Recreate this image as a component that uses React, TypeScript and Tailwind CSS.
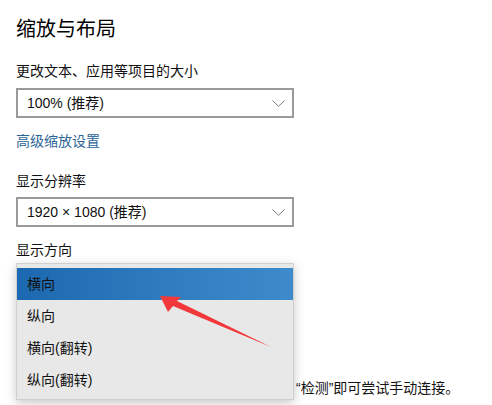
import React from "react";

const font = { fontFamily: '"Liberation Sans", "Noto Sans CJK SC", sans-serif' };

function Chevron() {
  return (
    <svg width="13" height="7" viewBox="0 0 13 7" className="shrink-0">
      <path d="M0.5 0.5 L6.5 6.3 L12.5 0.5" fill="none" stroke="#7a7a7a" strokeWidth="1" />
    </svg>
  );
}

function Select({ value }: { value: string }) {
  return (
    <div className="flex items-center justify-between w-[278px] h-[30px] border-2 border-[#9a9a9a] bg-white pl-[9px] pr-[7px]">
      <span className="text-[14px] leading-[20px] text-[#111]">{value}</span>
      <Chevron />
    </div>
  );
}

export default function App() {
  const items = ["横向", "纵向", "横向(翻转)", "纵向(翻转)"];
  return (
    <div className="relative w-[492px] h-[405px] overflow-hidden bg-white" style={font}>
      <div className="flex flex-col items-start px-4">
        <div className="mt-[15px] text-[20px] leading-[28px] text-black">缩放与布局</div>
        <div className="mt-[18px] text-[14px] leading-[20px] text-[#111]">更改文本、应用等项目的大小</div>
        <div className="mt-[7px]">
          <Select value="100% (推荐)" />
        </div>
        <div className="mt-[13px] text-[14px] leading-[20px] text-[#2c6496]">高级缩放设置</div>
        <div className="mt-[20px] text-[14px] leading-[20px] text-[#111]">显示分辨率</div>
        <div className="mt-[6px]">
          <Select value="1920 × 1080 (推荐)" />
        </div>
        <div className="mt-[13px] text-[14px] leading-[20px] text-[#111]">显示方向</div>
        <div className="mt-[118px] ml-[280px] text-[14px] leading-[20px] text-[#111] whitespace-nowrap">
          “检测”即可尝试手动连接。
        </div>
      </div>

      {/* dropdown popup */}
      <div className="absolute left-[16px] top-[263px] w-[278px] h-[137px] border border-[#cfcfcf] bg-[#e8e8e8] py-[4px] shadow-[0_3px_10px_rgba(0,0,0,0.22)]">
        {items.map((it, i) => (
          <div
            key={it}
            className={
              i === 0
                ? "flex items-center h-[32px] pl-[10px] text-[14px] text-[#111] bg-linear-to-r from-[#1d69b1] to-[#3d8bcb]"
                : "flex items-center h-[32px] pl-[10px] text-[14px] text-[#111]"
            }
          >
            {it}
          </div>
        ))}
      </div>

      {/* red arrow annotation */}
      <svg className="absolute left-0 top-0 pointer-events-none" width="492" height="405" viewBox="0 0 492 405">
        <polygon
          points="160,296 181,297 177,301 271,347 173,306 168,312"
          fill="#f2383a"
        />
      </svg>
    </div>
  );
}
